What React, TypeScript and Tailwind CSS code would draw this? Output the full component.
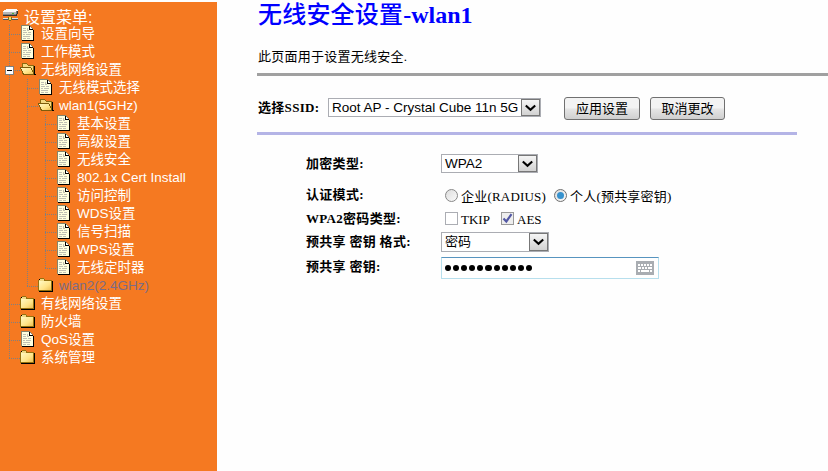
import type { ReactNode } from "react";

type Kind = "doc" | "open" | "closed";
type Item = { level: number; kind: Kind; label: string; muted?: boolean; expanded?: boolean };

const items: Item[] = [
  { level: 1, kind: "doc", label: "设置向导" },
  { level: 1, kind: "doc", label: "工作模式" },
  { level: 1, kind: "open", label: "无线网络设置", expanded: true },
  { level: 2, kind: "doc", label: "无线模式选择" },
  { level: 2, kind: "open", label: "wlan1(5GHz)" },
  { level: 3, kind: "doc", label: "基本设置" },
  { level: 3, kind: "doc", label: "高级设置" },
  { level: 3, kind: "doc", label: "无线安全" },
  { level: 3, kind: "doc", label: "802.1x Cert Install" },
  { level: 3, kind: "doc", label: "访问控制" },
  { level: 3, kind: "doc", label: "WDS设置" },
  { level: 3, kind: "doc", label: "信号扫描" },
  { level: 3, kind: "doc", label: "WPS设置" },
  { level: 3, kind: "doc", label: "无线定时器" },
  { level: 2, kind: "closed", label: "wlan2(2.4GHz)", muted: true },
  { level: 1, kind: "closed", label: "有线网络设置" },
  { level: 1, kind: "closed", label: "防火墙" },
  { level: 1, kind: "doc", label: "QoS设置" },
  { level: 1, kind: "closed", label: "系统管理" },
];

const sans = "font-['Liberation_Sans','Noto_Sans_CJK_SC',sans-serif]";
const serif = "font-['Liberation_Serif','Noto_Sans_CJK_SC',serif]";

function DocIcon() {
  return (
    <svg width="18" height="18" viewBox="0 0 18 18" shapeRendering="crispEdges" className="shrink-0">
      <path d="M4 1h8v1h1v1h1v1h1v1h1v11H4z" fill="#000" />
      <path d="M3 0h9v1h1v1h1v1h1v12H3z" fill="#85856c" />
      <path d="M4 1h7v4h4v10H4z" fill="#ffffde" />
      <path d="M11 1h1v3h3v1h-4z" fill="#000" />
      <path d="M12 2h1v1h1v1h-2z" fill="#fff" />
      <path d="M5 3.5h3M5 5.5h3M9 5.5h2M5 7.5h4M10 7.5h3M5 9.5h2M8 9.5h5M5 11.5h7M5 13.5h3M9 13.5h3" stroke="#c0c0b4" />
      <path d="M9 3h1v2H9z" fill="#c0c0b4" />
    </svg>
  );
}

function FolderIcon({ open }: { open: boolean }) {
  return (
    <svg width="18" height="18" viewBox="0 0 18 18" shapeRendering="crispEdges" className="shrink-0">
      <defs>
        <linearGradient id="folder" x1="0" y1="0" x2="1" y2="1">
          <stop offset="0" stopColor="#fff9c4" />
          <stop offset=".6" stopColor="#ffe487" />
          <stop offset="1" stopColor="#eebf54" />
        </linearGradient>
      </defs>
      {open ? (
        <>
          <path d="M16 5h1v8h1v1H6v-1h10z" fill="#000" />
          <path d="M4 2h5v1h1v1h6v9H4z" fill="#8a6a10" />
          <path d="M5 3h4v1h1v1h5v7H5z" fill="#f5d981" />
          <path d="M2 6h11v1h1v2h1v2h1v3H5v-2H4v-2H3V8H2z" fill="#7c5c0b" />
          <path d="M3 7h10v2h1v2h1v2H6v-1H5v-2H4V8H3z" fill="url(#folder)" />
        </>
      ) : (
        <>
          <path d="M4 1h4v1h1v2h8v11H3V2h1z" fill="#000" />
          <path d="M4 1h4v1h1v1h7v11H2V3h2z" fill="#96710f" />
          <path d="M4 2h4v2H3V3h1z" fill="#eed987" />
          <path d="M3 4h12v9H3z" fill="url(#folder)" />
        </>
      )}
    </svg>
  );
}

function RouterIcon() {
  return (
    <svg width="17" height="14" viewBox="0 0 17 14" shapeRendering="crispEdges" className="shrink-0">
      <path d="M4 2h12v4h-1v2H1V4h1V3h2z" fill="#343434" />
      <path d="M4 1h11v1h1v1h-2v1H1V3h1V2h2z" fill="#fafafa" />
      <path d="M1 4h13v2H1z" fill="#b6b6b6" />
      <path d="M1 6h13v1H1z" fill="#848484" />
      <path d="M14 3h1v3h-1z" fill="#777" />
      <path d="M10 5h2v1h-2z" fill="#48af37" />
      <path d="M1 10h15v1H1z" fill="#e0e0e0" />
      <path d="M1 11h15v1H1z" fill="#555" />
      <path d="M6 9h4v3H9v1H7v-1H6z" fill="#7a6a20" />
      <path d="M7 9h2v3H7z" fill="#efdc58" />
    </svg>
  );
}

/* Dotted connector cell to the left of an entry's icon. */
function Guide({ vertical, branch, half, expanded }: { vertical: boolean; branch: boolean; half: boolean; expanded?: boolean }) {
  return (
    <svg width="18" height="18" viewBox="0 0 18 18" shapeRendering="crispEdges" className="shrink-0 overflow-visible">
      {vertical && <path d={half ? "M9.5 0V10" : "M9.5 0V18"} stroke="#808080" strokeDasharray="1 1" />}
      {branch && <path d="M9 9.5H20" stroke="#808080" strokeDasharray="1 1" />}
      {expanded && (
        <>
          <path d="M5 5h9v9H5z" fill="#808080" />
          <path d="M6 6h7v7H6z" fill="#fff" />
          <path d="M7 9h5v1H7z" fill="#000" />
        </>
      )}
    </svg>
  );
}

function TreeRow({ item, index }: { item: Item; index: number }) {
  const cells = Array.from({ length: item.level }, (_, i) => {
    const branch = i === item.level - 1;
    const rest = items.slice(index + 1);
    const end = rest.findIndex((r) => r.level < i + 1);
    const more = (end < 0 ? rest : rest.slice(0, end)).some((r) => r.level === i + 1);
    return <Guide key={i} vertical={branch || more} branch={branch} half={branch && !more} expanded={branch && item.expanded} />;
  });
  return (
    <div className="flex h-[18px] items-center">
      {cells}
      {item.kind === "doc" ? <DocIcon /> : <FolderIcon open={item.kind === "open"} />}
      <span className={`ml-[5px] text-[13.5px] leading-[18px] whitespace-nowrap ${item.muted ? "text-[#7b6c87]" : "text-white"}`}>{item.label}</span>
    </div>
  );
}

function Select({ className, children }: { className: string; children: ReactNode }) {
  return (
    <div className={`flex items-stretch border border-[#abadb3] bg-white ${className}`}>
      <span className="flex flex-1 items-center overflow-hidden pl-[3px] whitespace-nowrap">{children}</span>
      <span className="flex w-[19px] items-center justify-center border border-[#777] bg-linear-to-b from-[#f5f5f5] to-[#d2d2d2]">
        <svg width="11" height="8" viewBox="0 0 11 8" className="shrink-0">
          <path d="M.8 1.4 5.5 5.8 10.2 1.4" fill="none" stroke="#000" strokeWidth="2.1" />
        </svg>
      </span>
    </div>
  );
}

function Button({ className, children }: { className: string; children: ReactNode }) {
  return (
    <button className={`h-[23px] rounded-[3px] border border-[#707070] bg-linear-to-b from-[#f3f3f3] from-45% via-[#e4e4e4] via-55% to-[#cfcfcf] text-[13px] leading-[19px] text-black ${className}`}>
      {children}
    </button>
  );
}

function Row({ className, label, children }: { className: string; label: string; children: ReactNode }) {
  return (
    <div className={`flex items-center ${className}`}>
      <div className="w-[135px] text-[13px] leading-[18px] font-bold tracking-[0.3px] whitespace-nowrap">{label}</div>
      {children}
    </div>
  );
}

function Radio({ on }: { on?: boolean }) {
  return (
    <span className={`flex size-[13px] shrink-0 items-center justify-center rounded-full border bg-linear-to-br from-[#ddd] to-[#fafafa] ${on ? "border-[#707070]" : "border-[#888]"}`}>
      {on && <span className="size-[7px] rounded-full bg-[#3792ce]" />}
    </span>
  );
}

export default function App() {
  return (
    <div className={`flex h-[471px] w-[828px] overflow-hidden bg-[#fefefe] text-black ${serif}`}>
      <aside className={`mt-[2px] w-[217px] shrink-0 bg-[#f57921] ${sans}`}>
        <div className="flex h-[23px] pt-[6px] pl-[2px] text-white">
          <RouterIcon />
          <span className="ml-[5px] pt-px text-[16px] leading-[18px]">设置菜单:</span>
        </div>
        {items.map((item, i) => (
          <TreeRow key={item.label} item={item} index={i} />
        ))}
      </aside>
      <main className="ml-[40px] w-[571px]">
        <h1 className="h-[46px] pt-px pl-px text-[24px] leading-[28px] font-bold whitespace-nowrap text-[#0000ff]">
          <span className="font-medium tracking-[0.2px]">无线安全设置</span>-wlan1
        </h1>
        <p className="h-[27px] pl-px text-[13px] leading-[21px] tracking-[0.25px]">此页面用于设置无线安全.</p>
        <div className="h-[3px] bg-[#a0a0a0]" />
        <div className="flex h-[56px] items-start pt-[21px]">
          <span className="w-[71px] pl-px text-[13px] leading-[21px] font-bold tracking-[0.3px] whitespace-nowrap">选择SSID:</span>
          <Select className={`mt-px h-[19px] w-[213px] text-[13.5px] leading-[17px] ${sans}`}>Root AP - Crystal Cube 11n 5G</Select>
          <Button className="ml-[23px] w-[76px]">应用设置</Button>
          <Button className="ml-[10px] w-[75px]">取消更改</Button>
        </div>
        <div className="h-[3px] w-[540px] bg-[#b4b4e6]" />
        <section className="pt-[19px] pl-[49px] text-[13px]">
          <Row className="h-[19px]" label="加密类型:">
            <Select className={`h-[19px] w-[97px] text-[13.5px] leading-[17px] ${sans}`}>WPA2</Select>
          </Row>
          <Row className="mt-[10px] h-[24px]" label="认证模式:">
            <span className="ml-[4px] flex items-center gap-[3px] whitespace-nowrap">
              <Radio />
              <span className="w-[90px] pt-[3px] tracking-[0.2px]">企业(RADIUS)</span>
              <Radio on />
              <span className="pt-[3px] tracking-[0.2px]">个人(预共享密钥)</span>
            </span>
          </Row>
          <Row className="h-[23px]" label="WPA2密码类型:">
            <span className="ml-[4px] flex items-center gap-[3px]">
              <span className="size-[13px] border border-[#abadb3] bg-white" />
              <span className="w-[37px] pt-[3px]">TKIP</span>
              <span className="flex size-[13px] items-center justify-center border border-[#999] bg-[#eee]">
                <svg width="11" height="11" viewBox="0 0 11 11">
                  <path d="M1.5 5.5 4.3 8.5 9.5 1.2" fill="none" stroke="#5358a4" strokeWidth="2.2" />
                </svg>
              </span>
              <span className="pt-[3px]">AES</span>
            </span>
          </Row>
          <Row className="h-[24px]" label="预共享 密钥 格式:">
            <Select className="h-[20px] w-[108px]">密码</Select>
          </Row>
          <Row className="h-[25px]" label="预共享 密钥:">
            <div className="mt-[2px] flex h-[22px] w-[218px] items-center justify-between border border-[#b7dfed] border-t-[#5794bf] bg-white pr-[4px] pl-[3px]">
              <span className="flex gap-[2px] pt-px">
                {Array.from({ length: 11 }, (_, i) => (
                  <span key={i} className="h-[6px] w-[6.1px] rounded-full bg-black" />
                ))}
              </span>
              <svg width="18" height="14" viewBox="0 0 18 14" shapeRendering="crispEdges">
                <path d="M0 0h18v14H0z" fill="#a9adb2" />
                <path d="M2 3h2v2H2zM5 3h2v2H5zM8 3h2v2H8zM11 3h2v2h-2zM14 3h2v2h-2zM2 6h3v2H2zM6 6h2v2H6zM9 6h2v2H9zM12 6h4v2h-4zM2 9h2v2H2zM5 9h8v2H5zM14 9h2v2h-2z" fill="#fff" />
              </svg>
            </div>
          </Row>
        </section>
      </main>
    </div>
  );
}
